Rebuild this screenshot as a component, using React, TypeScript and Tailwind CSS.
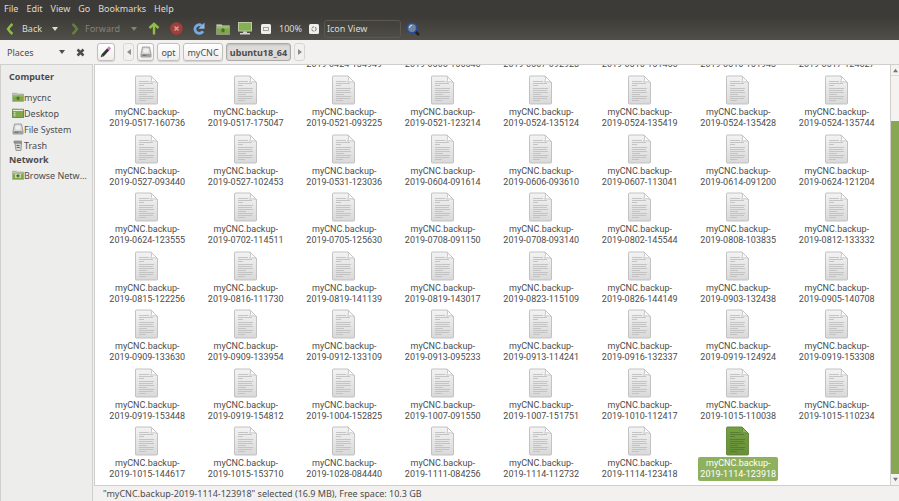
import React, { useId } from "react";

const previous = ["", "", "2019-0424-134949", "2019-0506-155546", "2019-0507-092928", "2019-0516-151455", "2019-0516-151943", "2019-0517-124627"];

const backups = [
  "0517-160736", "0517-175047", "0521-093225", "0521-123214", "0524-135124", "0524-135419", "0524-135428", "0524-135744",
  "0527-093440", "0527-102453", "0531-123036", "0604-091614", "0606-093610", "0607-113041", "0614-091200", "0624-121204",
  "0624-123555", "0702-114511", "0705-125630", "0708-091150", "0708-093140", "0802-145544", "0808-103835", "0812-133332",
  "0815-122256", "0816-111730", "0819-141139", "0819-143017", "0823-115109", "0826-144149", "0903-132438", "0905-140708",
  "0909-133630", "0909-133954", "0912-133109", "0913-095233", "0913-114241", "0916-132337", "0919-124924", "0919-153308",
  "0919-153448", "0919-154812", "1004-152825", "1007-091550", "1007-151751", "1010-112417", "1015-110038", "1015-110234",
  "1015-144617", "1015-153710", "1028-084440", "1111-084256", "1114-112732", "1114-123418", "1114-123918",
];

const selected = "1114-123918";

function FileIcon({ active }: { active: boolean }) {
  const id = useId();
  const edge = active ? "#5f8634" : "#bcbcbc";
  const line = active ? "#55792c" : "#c0c0c0";
  return (
    <svg width="24" height="30" viewBox="0 0 24 30" aria-hidden="true" className="shrink-0">
      <defs>
        <linearGradient id={id} x1="0" y1="0" x2="0" y2="1">
          <stop offset="0" stopColor={active ? "#75a042" : "#f3f3f3"} />
          <stop offset="1" stopColor={active ? "#678f39" : "#d9d9d9"} />
        </linearGradient>
      </defs>
      <path d="M1.500 1h14.500l6.500 6.500v20.500a1 1 0 0 1-1 1h-20a1 1 0 0 1-1-1v-26a1 1 0 0 1 1-1z" fill={`url(#${id})`} stroke={edge} strokeWidth=".9" />
      <path d="M16 1c.8 2 .8 4-.4 6.200 2.400-.7 4.700-.5 6.900.3z" fill={active ? "#8db55c" : "#fcfcfc"} stroke={edge} strokeWidth=".8" />
      <path d="M4 6.500h10M4 8.500h14M4 10.500h5M4 13.500h15M4 15.500h14M4 17.500h15M4 19.500h8M4 21.500h15M4 23.500h14M4 25.500h7" stroke={line} strokeWidth=".9" fill="none" />
    </svg>
  );
}

function FileItem({ stamp }: { stamp: string }) {
  const active = stamp === selected;
  return (
    <li className="flex flex-col items-center">
      <button type="button" aria-pressed={active} className="flex flex-col items-center">
        <FileIcon active={active} />
        <span className={`mt-px rounded-xs px-[2px] py-px text-center font-['Roboto','Noto_Sans',sans-serif] text-[9px] leading-[11px] ${active ? "bg-[#8fb15e] text-white" : ""}`}>
          myCNC.backup-
          <br />
          2019-{stamp}
        </span>
      </button>
    </li>
  );
}

function Triangle({ className, dir = "down" }: { className?: string; dir?: "down" | "up" | "left" | "right" }) {
  const d = { down: "M0 1h6L3 5z", up: "M0 5h6L3 1z", left: "M5 0v6L1 3z", right: "M1 0v6l4-3z" }[dir];
  return <svg width="6" height="6" viewBox="0 0 6 6" aria-hidden="true" className={className}><path d={d} fill="currentColor" /></svg>;
}

function FolderIcon({ mark, className }: { mark: "home" | "desktop" | "network"; className?: string }) {
  return (
    <svg viewBox="0 0 14 12" aria-hidden="true" className={className} preserveAspectRatio="none">
      <path d="M.5 1.500h5l1 1h7v9H.5z" fill="#c9c9c4" stroke="#91988a" strokeWidth=".7" />
      <path d="M1 3.500h12.500v7.500H1z" fill="#7fa84b" />
      {mark === "desktop" ? <path d="M.5 1.500h13v10H.5z" fill="#7fa84b" stroke="#5d7f36" strokeWidth=".9" /> : <path d="M1 3.500h12.500v2H1z" fill="#98bd68" />}
      {mark === "home" && <path d="M7 5 4.700 7.300h.9v2h2.800v-2h.9z" fill="#4d6e2c" />}
      {mark === "desktop" && <path d="M2 5h2v1H2zM2 7h2v1H2zM2 9h2v1H2zM1 2h12v1.500H1z" fill="#e4eed6" />}
      {mark === "network" && <><path d="M3.500 4.500h7v5h-7z" fill="#c9dab3" /><path d="M7 5v4M5 7h4" stroke="#43602a" strokeWidth="1.500" /></>}
    </svg>
  );
}

function DriveIcon({ className }: { className?: string }) {
  return (
    <svg viewBox="0 0 12 12" aria-hidden="true" className={className}>
      <path d="M2.500 1h7l1.500 7v3H1V8z" fill="#d4d4d4" stroke="#909090" strokeWidth=".8" />
      <ellipse cx="6" cy="4.500" rx="2.800" ry="2.300" fill="#efefef" />
      <path d="M1.300 8h9.400v2.700H1.300z" fill="#9d9d9d" />
      <path d="M2.500 9.400h4" stroke="#666" strokeWidth=".8" />
    </svg>
  );
}

function TrashIcon() {
  return (
    <svg width="12" height="11" viewBox="0 0 12 11" aria-hidden="true">
      <path d="M3 3h6.500L9 10.500H4z" fill="#d4d6d4" stroke="#848884" strokeWidth=".8" />
      <path d="M2 1h7.500v2H2z" fill="#999d99" stroke="#777b77" strokeWidth=".6" />
      <path d="M4.500 5.500h3M4.800 7.500h3" stroke="#626662" strokeWidth="1" />
    </svg>
  );
}

function Chevron({ dir, color }: { dir: "left" | "right"; color: string }) {
  return (
    <svg width="8" height="12" viewBox="0 0 8 12" aria-hidden="true">
      <path d={dir === "left" ? "M6.500 1Q4 3 2 6q2 3 4.500 5" : "M1.500 1Q4 3 6 6q-2 3-4.500 5"} fill="none" stroke={color} strokeWidth="2.300" />
    </svg>
  );
}

function ZoomGlyph({ reset }: { reset?: boolean }) {
  return (
    <svg width="10" height="10" viewBox="0 0 10 10" aria-hidden="true">
      <rect width="10" height="10" rx="1.500" fill="#eeeeec" />
      {reset ? <circle cx="5" cy="5" r="2.200" fill="none" stroke="#7a7873" strokeWidth="1" strokeDasharray="2.500 .9" /> : <rect x="2.500" y="3.500" width="5" height="3" fill="none" stroke="#9a9893" strokeWidth=".9" />}
    </svg>
  );
}

const crumb = "flex h-[18px] items-center justify-center rounded-[3px] border border-[#c0bfbb] bg-linear-to-b from-white to-[#efeeec] shadow-[0_1px_1px_#d4d3d0]";
const pathArrow = "flex h-[18px] w-[11px] items-center justify-center rounded-[3px] border border-[#d7d6d3] text-[#8c8c8c]";

const places = [
  { name: "mycnc", icon: <FolderIcon mark="home" className="h-[10px] w-3" /> },
  { name: "Desktop", icon: <FolderIcon mark="desktop" className="h-[10px] w-3" /> },
  { name: "File System", icon: <DriveIcon className="h-3 w-3" /> },
  { name: "Trash", icon: <TrashIcon /> },
];

function Place({ name, icon }: { name: string; icon: React.ReactNode }) {
  return (
    <li>
      <button type="button" className="flex h-4 w-full items-center pl-[11px] text-left">
        <span className="flex w-3 shrink-0 justify-center">{icon}</span>
        <span className="truncate">{name}</span>
      </button>
    </li>
  );
}

export default function App() {
  return (
    <div className="flex h-screen flex-col overflow-hidden bg-[#f2f1f0] font-['Noto_Sans','Open_Sans',sans-serif] text-[9px] leading-[11px] text-[#4c4c4c]">
      <header className="shrink-0 bg-linear-to-b from-[#3c3b37] from-40% to-[#504f49] text-[#dfdbd2]">
        <nav className="flex h-[17px] items-center gap-2 px-1">
          {["File", "Edit", "View", "Go", "Bookmarks", "Help"].map((item) => <button type="button" key={item}>{item}</button>)}
        </nav>
        <div className="flex h-[23px] items-center pl-[6px]" role="toolbar" aria-label="Navigation">
          <button type="button" className="flex w-[37px] items-center gap-2"><Chevron dir="left" color="#8ebd42" />Back</button>
          <button type="button" aria-label="Back history" className="ml-[9px] w-[19px]"><Triangle /></button>
          <button type="button" disabled className="flex w-[52px] items-center gap-[6px] text-[#85827a]"><Chevron dir="right" color="#66813c" />Forward</button>
          <button type="button" disabled aria-label="Forward history" className="ml-2 w-[17px] text-[#85827a]"><Triangle /></button>
          <button type="button" aria-label="Up" className="w-[22px]">
            <svg width="12" height="13" viewBox="0 0 12 13"><path d="M6 1.500V12.500M1.500 6 6 1.800 10.500 6" fill="none" stroke="#91bd48" strokeWidth="2.400" /></svg>
          </button>
          <button type="button" aria-label="Stop" className="w-[22px]">
            <svg width="13" height="13" viewBox="0 0 13 13"><circle cx="6.500" cy="6.500" r="6.200" fill="#a53d3b" /><path d="M4.500 4.500l4 4M8.500 4.500l-4 4" stroke="#c8aaa4" strokeWidth="1.400" /></svg>
          </button>
          <button type="button" aria-label="Reload" className="w-[24px]">
            <svg width="13" height="13" viewBox="0 0 13 13"><path d="M9.500 3.400A4.300 4.300 0 1 0 11 9.200" fill="none" stroke="#75a9e2" strokeWidth="2.800" /><path d="M12.500.5v6.200H6.300z" fill="#8ab9ec" /></svg>
          </button>
          <button type="button" aria-label="Home" className="w-[22px]"><FolderIcon mark="home" className="h-[12px] w-[14px]" /></button>
          <button type="button" aria-label="Computer" className="w-[23px]">
            <svg width="14" height="13" viewBox="0 0 14 13"><rect x=".5" y=".5" width="13" height="8.500" fill="#86b054" stroke="#b9c9a4" /><path d="M5 9.500h4v1.500h3v1.500H2V11h3z" fill="#d3d2cb" /></svg>
          </button>
          <button type="button" aria-label="Zoom out" className="w-[18px]"><ZoomGlyph /></button>
          <span className="w-[30px]">100%</span>
          <button type="button" aria-label="Reset zoom" className="w-[15px]"><ZoomGlyph reset /></button>
          <select aria-label="View mode" className="h-[18px] w-[77px] appearance-none rounded-[3px] border border-[#5a5851] bg-transparent px-[2px]"><option>Icon View</option></select>
          <button type="button" aria-label="Search" className="ml-[5px]">
            <svg width="14" height="14" viewBox="0 0 14 14"><path d="M9 9l4 4" stroke="#24231f" strokeWidth="2.500" /><circle cx="6" cy="6" r="4.700" fill="#71859c" stroke="#294da5" strokeWidth="1.600" /><path d="M3.500 6A2.500 2.500 0 0 1 6 3.300" stroke="#d5e2f0" fill="none" /></svg>
          </button>
        </div>
      </header>

      <div className="flex h-6 shrink-0 items-center">
        <div className="flex w-[97px] shrink-0 items-center pl-[7px]">
          <button type="button" className="flex w-[58px] items-center justify-between">Places<Triangle /></button>
          <button type="button" aria-label="Close side pane" className="ml-[11px]">
            <svg width="9" height="9" viewBox="0 0 9 9"><path d="M1.500 1.500l6 6M7.500 1.500l-6 6" stroke="#4c4c4c" strokeWidth="2.500" /></svg>
          </button>
        </div>
        <button type="button" aria-label="Edit location" className={`${crumb} w-[18px]`}>
          <svg width="12" height="12" viewBox="0 0 12 12"><path d="M2.500 9.500 8.500 3" stroke="#353535" strokeWidth="2.800" /><path d="M8 3.500 10 1.400" stroke="#cf80bd" strokeWidth="3" /><path d="M.7 11.300 1.500 8.500l2 1.800z" fill="#333" /></svg>
        </button>
        <nav aria-label="Location" className="ml-2 flex items-center gap-[3px]">
          <button type="button" aria-label="Scroll path left" className={pathArrow}><Triangle dir="left" /></button>
          <button type="button" aria-label="File System" className={`${crumb} w-[17px]`}><DriveIcon className="h-3 w-3" /></button>
          <button type="button" className={`${crumb} w-[23px]`}>opt</button>
          <button type="button" className={`${crumb} w-[40px]`}>myCNC</button>
          <button type="button" aria-current="page" className="flex h-[18px] w-[65px] items-center justify-center rounded-[3px] border border-[#aaa9a5] bg-[#dcdbd9] font-bold shadow-[inset_0_1px_2px_#bdbcb9]">ubuntu18_64</button>
          <button type="button" aria-label="Scroll path right" className={pathArrow}><Triangle dir="right" /></button>
        </nav>
      </div>

      <div className="flex min-h-0 flex-1">
        <aside className="w-[93px] shrink-0 border border-b-0 border-[#d0cfcd] bg-[#ededec] pt-[6px]">
          <h2 className="pl-2 font-bold">Computer</h2>
          <ul className="pt-[7px]">{places.map((p) => <Place key={p.name} {...p} />)}</ul>
          <h2 className="py-px pl-2 font-bold">Network</h2>
          <ul className="pt-px"><Place name="Browse Network" icon={<FolderIcon mark="network" className="h-[10px] w-3" />} /></ul>
        </aside>
        <div className="flex min-w-0 flex-1 flex-col pl-px">
          <main className="flex min-h-0 flex-1 border border-r-0 border-[#cfcecb] bg-white">
            <div className="flex min-w-0 flex-1 flex-col justify-end overflow-hidden pr-1 pl-[3px]">
              <ul className="grid shrink-0 grid-cols-8 pb-[5px] text-center font-['Roboto','Noto_Sans',sans-serif]">
                {previous.map((name, i) => <li key={i}>{name}</li>)}
              </ul>
              <ul className="grid h-[410px] shrink-0 grid-cols-8 grid-rows-7">
                {backups.map((stamp) => <FileItem key={stamp} stamp={stamp} />)}
              </ul>
            </div>
            <div aria-hidden="true" className="flex w-[9px] shrink-0 flex-col border-l border-[#cfcecb] bg-[#f4f3f2] text-[#777]">
              <div className="flex h-[11px] items-center justify-center border-b border-[#dad9d6]"><Triangle dir="up" className="h-[5px] w-[5px]" /></div>
              <div className="h-[45px]" />
              <div className="flex-1 bg-[#87a752]" />
              <div className="flex h-[11px] items-center justify-center"><Triangle className="h-[5px] w-[5px]" /></div>
            </div>
          </main>
          <footer className="h-[15px] shrink-0 pt-[2px] pl-[9px]">"myCNC.backup-2019-1114-123918" selected (16.9 MB), Free space: 10.3 GB</footer>
        </div>
      </div>
    </div>
  );
}
